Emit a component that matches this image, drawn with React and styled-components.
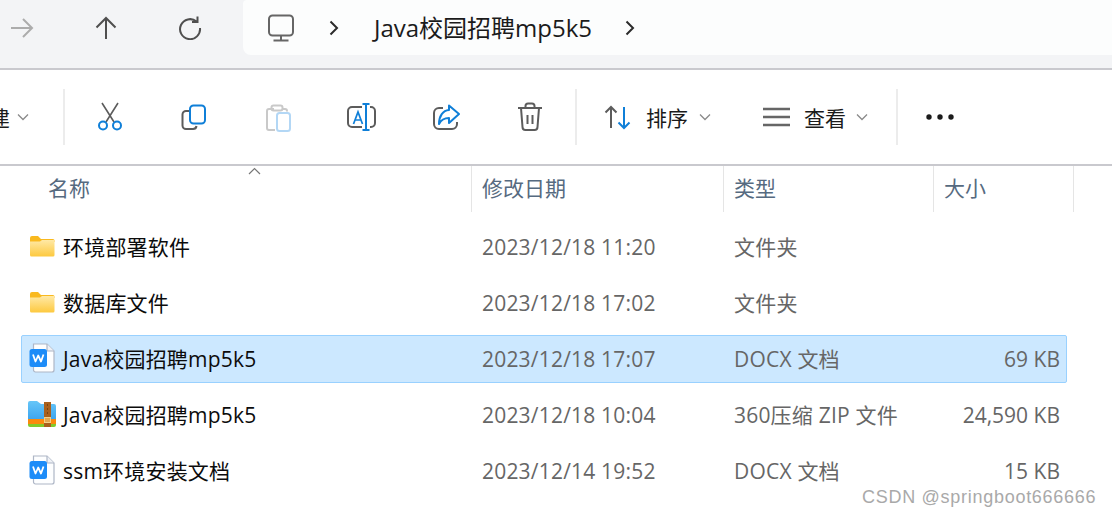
import React from "react";
import styled, { createGlobalStyle } from "styled-components";

const GlobalStyle = createGlobalStyle`
	html, body {
		margin: 0;
		padding: 0;
		background: #fff;
	}
	body {
		font-family: "Open Sans", "Noto Sans CJK SC", sans-serif;
	}
`;

const Page = styled.div`
	position: relative;
	width: 1112px;
	height: 517px;
	overflow: hidden;
	background: #fff;
`;

const NavBar = styled.div`
	display: flex;
	align-items: flex-start;
	height: 68px;
	margin-left: -20px;
	background: #f3f4f6;
	border-bottom: 2px solid #c9c9ce;
`;

const NavButton = styled.div`
	display: flex;
	align-items: center;
	justify-content: center;
	flex: none;
	width: 84px;
	height: 55px;
`;

const AddressBox = styled.div`
	display: flex;
	align-items: center;
	flex: 1;
	height: 55px;
	margin-left: 11px;
	padding-left: 24px;
	background: #fcfdfd;
	border-radius: 4px 0 0 8px;
`;

const Crumb = styled.span`
	margin: -2px 33px 0 35px;
	font-size: 24px;
	color: #1b1b1b;
	white-space: nowrap;
`;

const Toolbar = styled.div`
	display: flex;
	align-items: center;
	height: 94px;
	border-bottom: 2px solid #c9c9ce;
`;

const ToolLabel = styled.span`
	margin-left: ${(p) => p.$left || 0}px;
	font-size: 21px;
	color: #1b1b1b;
	white-space: nowrap;
`;

const Chevron = styled.svg`
	flex: none;
	width: 12px;
	height: 8px;
	margin-left: ${(p) => p.$left}px;
	fill: none;
	stroke: #8a8a8a;
	stroke-width: 1.3;
`;

const Divider = styled.div`
	flex: none;
	width: 2px;
	height: 56px;
	margin: 0 ${(p) => p.$right || 0}px 0 ${(p) => p.$left || 0}px;
	background: #ececec;
`;

const ToolButton = styled.div`
	display: flex;
	align-items: center;
	justify-content: center;
	flex: none;
	width: 84px;
	height: 32px;
`;

const ToolGroup = styled.div`
	display: flex;
	align-items: center;
	flex: none;
	margin-left: ${(p) => p.$left}px;
`;

const Icon = styled.svg`
	flex: none;
	width: ${(p) => p.$w || 32}px;
	height: ${(p) => p.$h || 32}px;
	margin-left: ${(p) => p.$left || 0}px;
	fill: none;
	stroke-width: 2;
`;

const HeaderRow = styled.div`
	display: grid;
	grid-template-columns: 472px 252px 210px 140px;
	position: relative;
	height: 46px;
`;

const HeaderCell = styled.div`
	height: 46px;
	padding-left: ${(p) => p.$pad}px;
	border-right: 1px solid #e5e5e5;
	box-sizing: border-box;
	font-size: 21px;
	line-height: 45px;
	color: #566a80;
	white-space: nowrap;
`;

const SortMark = styled.svg`
	position: absolute;
	left: 248px;
	top: 1px;
	width: 13px;
	height: 8px;
	fill: none;
	stroke: #777;
	stroke-width: 1.2;
`;

const FileList = styled.div`
	display: flex;
	flex-direction: column;
	gap: 8px;
	margin: 11px 0 0 21px;
	width: 1046px;
`;

const Row = styled.div`
	display: grid;
	grid-template-columns: 450px 252px 210px 134px;
	align-items: center;
	height: 48px;
	box-sizing: border-box;
	background: ${(p) => (p.$selected ? "#cce8ff" : "transparent")};
	border: 1px solid ${(p) => (p.$selected ? "#99d1ff" : "transparent")};
	border-radius: 2px;
	font-size: 21px;
	letter-spacing: 0.2px;
	white-space: nowrap;
`;

const NameCell = styled.div`
	display: flex;
	align-items: center;
	padding-bottom: 2px;
	color: #0c0c0c;
`;

const FileIconBox = styled.div`
	display: flex;
	align-items: center;
	justify-content: center;
	flex: none;
	width: 30px;
	height: 30px;
	margin: 0 6px 0 5px;
`;

const DateCell = styled.div`
	padding-left: 10px;
	color: #666;
`;

const TypeCell = styled(DateCell)`
	padding-bottom: 2px;
`;

const SizeCell = styled.div`
	padding-right: 8px;
	text-align: right;
	letter-spacing: 0;
	color: #666;
`;

const Watermark = styled.div`
	position: absolute;
	left: 862px;
	top: 486px;
	font-family: "Liberation Sans", sans-serif;
	font-size: 18px;
	line-height: 22px;
	letter-spacing: 0.72px;
	color: #a9a9a9;
	white-space: nowrap;
`;

const BLUE = "#0f7fd8";
const GRAY = "#5c5c5c";

const ChevronDown = ({ left }) => (
	<Chevron $left={left} viewBox="0 0 12 8">
		<path d="M1 1.5 6 6.5 11 1.5" />
	</Chevron>
);

const CrumbArrow = ({ left }) => (
	<Icon $w={10} $h={16} $left={left} viewBox="0 0 10 16" stroke="#2b2b2b" strokeWidth="1.6">
		<path d="M1.500 1.500 8 8 1.500 14.500" />
	</Icon>
);

const ForwardIcon = () => (
	<Icon $w={24} $h={24} viewBox="0 0 24 24" stroke="#acacac" strokeWidth="1.6">
		<path d="M1 12H22M13 3 22 12 13 21" />
	</Icon>
);

const UpIcon = () => (
	<Icon $w={24} $h={24} viewBox="0 0 24 24" stroke="#4f4f4f" strokeWidth="1.6">
		<path d="M12 23V2M2.500 11.500 12 2 21.500 11.500" />
	</Icon>
);

const RefreshIcon = () => (
	<Icon $w={24} $h={24} viewBox="0 0 24 24" stroke="#4f4f4f" strokeWidth="1.6">
		<path d="M18.500 5.500A10 10 0 1 0 22 12M19.500 0.500V6H14" />
	</Icon>
);

const MonitorIcon = () => (
	<Icon $w={28} $h={28} viewBox="0 0 28 28" stroke="#666" strokeWidth="2">
		<rect x="2" y="1.500" width="24" height="20" rx="3.500" />
		<path d="M14 21.500V26M6.500 26.500H21.500" />
	</Icon>
);

const ScissorsIcon = () => (
	<Icon viewBox="0 0 32 32">
		<path d="M8 2 20 21M24 2 12 21" stroke={GRAY} strokeWidth="1.600" />
		<circle cx="9" cy="24.500" r="4" stroke={BLUE} />
		<circle cx="23" cy="24.500" r="4" stroke={BLUE} />
	</Icon>
);

const CopyIcon = () => (
	<Icon viewBox="0 0 32 32">
		<path d="M11 10H8A3.500 3.500 0 0 0 4.500 13.500V24.500A3.500 3.500 0 0 0 8 28H15A3.500 3.500 0 0 0 18.500 25" stroke={GRAY} />
		<rect x="12" y="4.500" width="15" height="18" rx="3.500" stroke={BLUE} />
	</Icon>
);

const PasteIcon = () => (
	<Icon viewBox="0 0 32 32">
		<path d="M12 8H7A2 2 0 0 0 5 10V27A2 2 0 0 0 7 29H13M20 8H23A2 2 0 0 1 25 10V10.500" stroke="#c9c9c9" />
		<rect x="9.500" y="4.500" width="11" height="5" rx="2" stroke="#c9c9c9" />
		<rect x="15" y="12" width="13" height="18" rx="2.500" stroke="#b3d7f5" />
	</Icon>
);

const RenameIcon = () => (
	<Icon viewBox="0 0 32 32">
		<path d="M16 6H6A4 4 0 0 0 2 10V22A4 4 0 0 0 6 26H16M24 6H25A4 4 0 0 1 29 10V22A4 4 0 0 1 25 26H24" stroke={GRAY} />
		<path d="M20 3V29M16.500 3H23.500M16.500 29H23.500" stroke={BLUE} />
		<path d="M7.500 23 12 11 16.500 23M9 19H15" stroke={BLUE} strokeWidth="1.700" />
	</Icon>
);

const ShareIcon = () => (
	<Icon viewBox="0 0 32 32">
		<path d="M13 7H9A5 5 0 0 0 4 12V23A5 5 0 0 0 9 28H22A5 5 0 0 0 27 23V21" stroke={GRAY} />
		<path d="M19 4.500 29 13 19 22V17C14 17 11 19 9 23 9 15 13 9.500 19 9Z" stroke={BLUE} strokeLinejoin="round" />
	</Icon>
);

const TrashIcon = () => (
	<Icon viewBox="0 0 32 32">
		<path d="M4 7H28M11.500 7V5A2.500 2.500 0 0 1 14 2.500H18A2.500 2.500 0 0 1 20.500 5V7M7 7 8.500 26A3 3 0 0 0 11.500 29H20.500A3 3 0 0 0 23.500 26L25 7M13.500 14V23M18.500 14V23" stroke={GRAY} />
	</Icon>
);

const SortIcon = () => (
	<Icon viewBox="0 0 32 32">
		<path d="M8 27V6M2.500 11.500 8 6 13.500 11.500" stroke={GRAY} />
		<path d="M21 6V27M15.500 21.500 21 27 26.500 21.500" stroke={BLUE} />
	</Icon>
);

const ViewIcon = () => (
	<Icon viewBox="0 0 32 32" stroke="#666">
		<path d="M3 8H30M3 16H30M3 24H30" strokeWidth="2.400" />
	</Icon>
);

const DotsIcon = () => (
	<Icon $w={32} $h={8} viewBox="0 0 32 8">
		<circle cx="5" cy="4" r="2.700" fill="#1b1b1b" />
		<circle cx="16" cy="4" r="2.700" fill="#1b1b1b" />
		<circle cx="27" cy="4" r="2.700" fill="#1b1b1b" />
	</Icon>
);

const FolderIcon = () => (
	<Icon $w={26} $h={22} viewBox="0 0 26 22">
		<defs>
			<linearGradient id="folderBody" x1="0" y1="0" x2="0" y2="1">
				<stop offset="0" stopColor="#ffe9a6" />
				<stop offset="1" stopColor="#fdc93f" />
			</linearGradient>
		</defs>
		<path d="M1 3A2 2 0 0 1 3 1H9L12 4H24A1.500 1.500 0 0 1 25.500 5.500V7H1Z" fill="#f9b91f" />
		<path d="M1 6.500 11 6.500 13 5H25.500V20A1.500 1.500 0 0 1 24 21.500H2.500A1.500 1.500 0 0 1 1 20Z" fill="url(#folderBody)" />
	</Icon>
);

const DocIcon = () => (
	<Icon $w={26} $h={30} viewBox="0 0 26 30">
		<path d="M4.500 1H18L25 8V27A2 2 0 0 1 23 29H6.500A2 2 0 0 1 4.500 27Z" fill="#fdfeff" stroke="#aeb6c6" strokeWidth="1.200" />
		<path d="M18 1V8H25" fill="#eef1f6" stroke="#aeb6c6" strokeWidth="1.200" />
		<rect x="0.500" y="6" width="17.500" height="18" rx="2.500" fill="#1d8cf8" />
		<path d="M4 11.500 6.500 18.500 9.200 12.500 12 18.500 14.500 11.500" stroke="#fff" strokeWidth="1.800" strokeLinejoin="round" />
	</Icon>
);

const ZipIcon = () => (
	<Icon $w={28} $h={26} viewBox="0 0 28 26">
		<defs>
			<linearGradient id="zipBody" x1="0" y1="0" x2="0" y2="1">
				<stop offset="0" stopColor="#66c6f8" />
				<stop offset="1" stopColor="#3fa6ef" />
			</linearGradient>
		</defs>
		<path d="M0 2A2 2 0 0 1 2 0H9L13 3H26A2 2 0 0 1 28 5V18H0Z" fill="url(#zipBody)" />
		<rect x="0" y="18" width="28" height="5" fill="#fb8a0c" />
		<path d="M0 23H28V24A2 2 0 0 1 26 26H2A2 2 0 0 1 0 24Z" fill="#83c92b" />
		<rect x="16" y="1" width="7" height="25" fill="#a9601c" />
		<path d="M19.500 3V15" stroke="#7a4310" strokeWidth="1" strokeDasharray="2 2" />
		<rect x="16.500" y="16.500" width="6" height="5" fill="#e2a750" stroke="#f3cf8a" strokeWidth="1" />
	</Icon>
);

const files = [
	{ kind: "folder", name: "环境部署软件", date: "2023/12/18 11:20", type: "文件夹", size: "" },
	{ kind: "folder", name: "数据库文件", date: "2023/12/18 17:02", type: "文件夹", size: "" },
	{ kind: "doc", name: "Java校园招聘mp5k5", date: "2023/12/18 17:07", type: "DOCX 文档", size: "69 KB", selected: true },
	{ kind: "zip", name: "Java校园招聘mp5k5", date: "2023/12/18 10:04", type: "360压缩 ZIP 文件", size: "24,590 KB" },
	{ kind: "doc", name: "ssm环境安装文档", date: "2023/12/14 19:52", type: "DOCX 文档", size: "15 KB" },
];

const fileIcons = { folder: FolderIcon, doc: DocIcon, zip: ZipIcon };

const App = () => {
	return (
		<Page>
			<GlobalStyle />
			<NavBar>
				<NavButton><ForwardIcon /></NavButton>
				<NavButton><UpIcon /></NavButton>
				<NavButton><RefreshIcon /></NavButton>
				<AddressBox>
					<MonitorIcon />
					<CrumbArrow left={34} />
					<Crumb>Java校园招聘mp5k5</Crumb>
					<CrumbArrow />
				</AddressBox>
			</NavBar>
			<Toolbar>
				<ToolLabel $left={-11}>建</ToolLabel>
				<ChevronDown left={7} />
				<Divider $left={34} $right={3} />
				<ToolButton><ScissorsIcon /></ToolButton>
				<ToolButton><CopyIcon /></ToolButton>
				<ToolButton><PasteIcon /></ToolButton>
				<ToolButton><RenameIcon /></ToolButton>
				<ToolButton><ShareIcon /></ToolButton>
				<ToolButton><TrashIcon /></ToolButton>
				<Divider $left={3} />
				<ToolGroup $left={26}>
					<SortIcon />
					<ToolLabel $left={11}>排序</ToolLabel>
					<ChevronDown left={11} />
				</ToolGroup>
				<ToolGroup $left={49}>
					<ViewIcon />
					<ToolLabel $left={12}>查看</ToolLabel>
					<ChevronDown left={10} />
				</ToolGroup>
				<Divider $left={28} />
				<ToolButton><DotsIcon /></ToolButton>
			</Toolbar>
			<HeaderRow>
				<SortMark viewBox="0 0 13 8"><path d="M1 7 6.500 1.500 12 7" /></SortMark>
				<HeaderCell $pad={48}>名称</HeaderCell>
				<HeaderCell $pad={10}>修改日期</HeaderCell>
				<HeaderCell $pad={10}>类型</HeaderCell>
				<HeaderCell $pad={10}>大小</HeaderCell>
			</HeaderRow>
			<FileList>
				{files.map((file, i) => {
					const FileIcon = fileIcons[file.kind];
					return (
						<Row key={i} $selected={file.selected}>
							<NameCell>
								<FileIconBox><FileIcon /></FileIconBox>
								{file.name}
							</NameCell>
							<DateCell>{file.date}</DateCell>
							<TypeCell>{file.type}</TypeCell>
							<SizeCell>{file.size}</SizeCell>
						</Row>
					);
				})}
			</FileList>
			<Watermark>CSDN @springboot666666</Watermark>
		</Page>
	);
};

export default App;
